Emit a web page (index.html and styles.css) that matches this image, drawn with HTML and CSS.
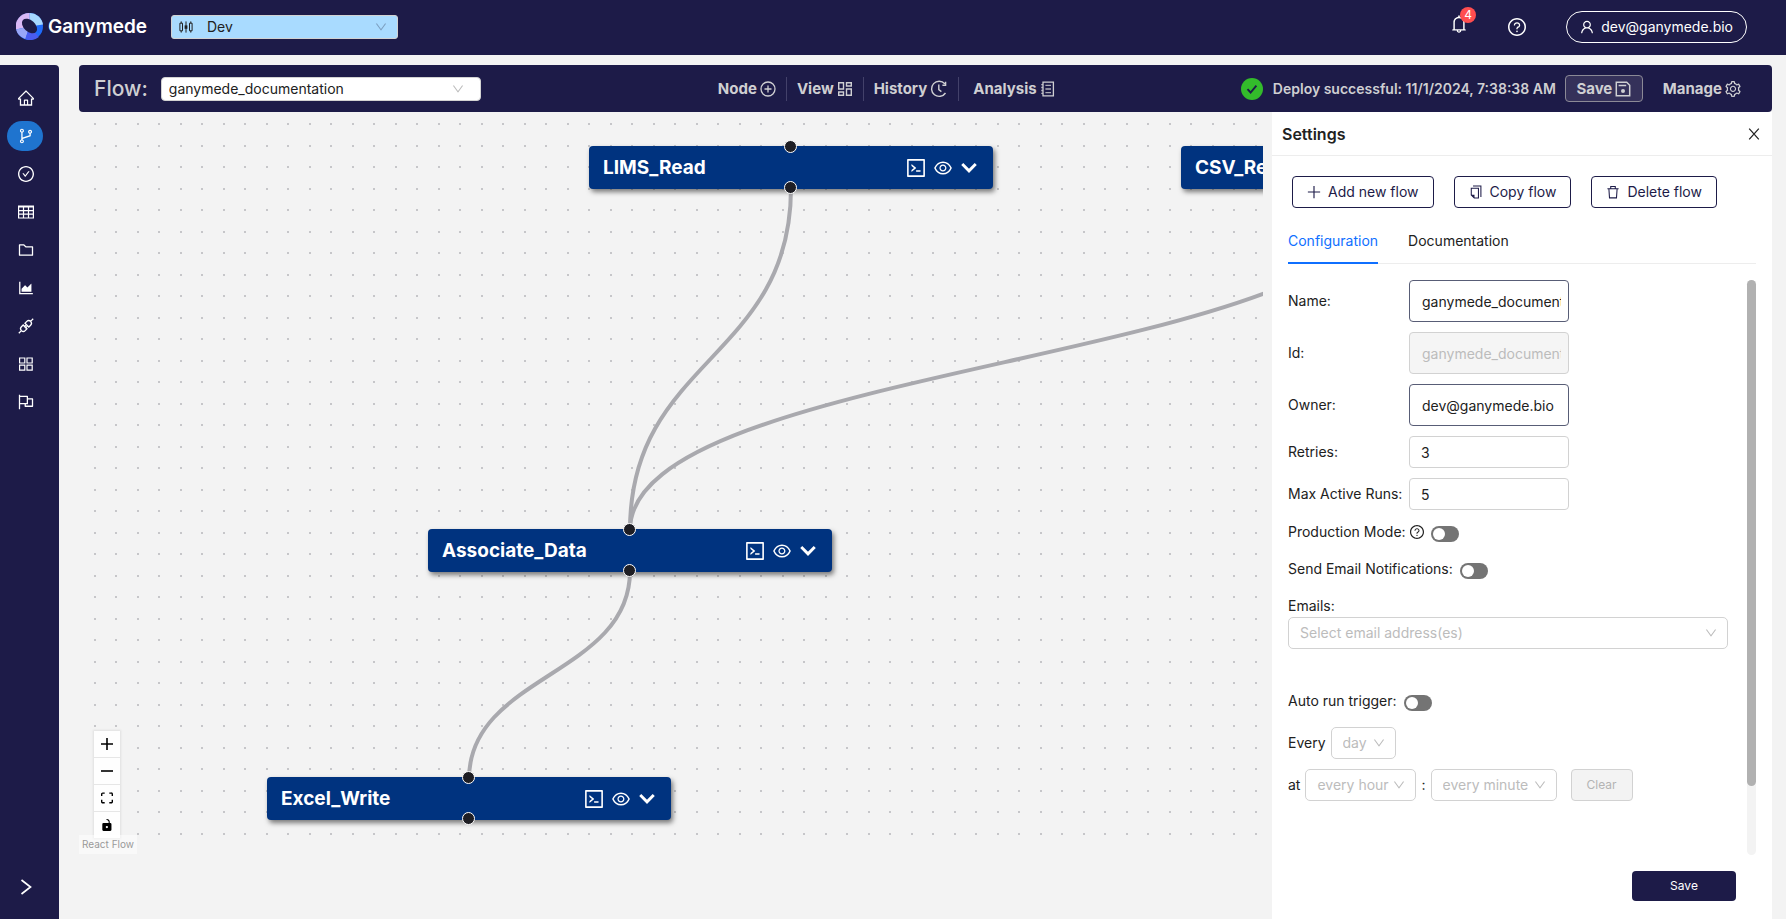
FILE: index.html
```html
<!DOCTYPE html>
<html lang="en">
<head>
<meta charset="utf-8">
<title>Ganymede – ganymede_documentation</title>
<link rel="stylesheet" href="styles.css">
</head>
<body>
<svg class="sprite" aria-hidden="true">
  <symbol id="i-down" viewBox="64 64 896 896"><path d="M884 256h-75c-5.1 0-9.9 2.5-12.9 6.6L512 654.2 227.9 262.6c-3-4.1-7.8-6.6-12.9-6.6h-75c-6.5 0-10.3 7.4-6.5 12.7l352.6 486.1c12.8 17.6 39 17.6 51.7 0l352.6-486.1c3.9-5.3.1-12.7-6.4-12.7z"/></symbol>
  <symbol id="i-chevron" viewBox="0 0 16 16"><path d="M2 4.500l6 6 6-6" fill="none" stroke="currentColor" stroke-width="2.600"/></symbol>
  <symbol id="i-home" viewBox="64 64 896 896"><path d="M946.5 505L560.1 118.8l-25.9-25.9a31.5 31.5 0 00-44.4 0L77.5 505a63.9 63.9 0 00-18.8 46c.4 35.2 29.7 63.3 64.9 63.3h42.5V940h691.8V614.3h43.4c17.1 0 33.2-6.7 45.3-18.8a63.6 63.6 0 0018.7-45.3c0-17-6.7-33.1-18.8-45.2zM568 868H456V664h112v204zm217.9-325.7V868H632V640c0-22.1-17.9-40-40-40H432c-22.1 0-40 17.9-40 40v228H238.1V542.3h-96l370-369.7 23.1 23.1L882 542.3h-96.1z"/></symbol>
  <symbol id="i-branch" viewBox="64 64 896 896"><path d="M740 161c-61.8 0-112 50.2-112 112 0 50.1 33.1 92.6 78.5 106.9v95.9L320 602.4V318.1c44.2-15 76-56.9 76-106.1 0-61.8-50.2-112-112-112s-112 50.2-112 112c0 49.2 31.8 91 76 106.1V706c-44.2 15-76 56.9-76 106.1 0 61.8 50.2 112 112 112s112-50.2 112-112c0-49.2-31.8-91-76-106.1v-27.8l423.5-138.7a50.52 50.52 0 0034.9-48.2V378.2c42.9-15.8 73.6-57 73.6-105.2 0-61.8-50.2-112-112-112zm-504 51a48.01 48.01 0 0196 0 48.01 48.01 0 01-96 0zm96 600a48.01 48.01 0 01-96 0 48.01 48.01 0 0196 0zm408-491a48.01 48.01 0 010-96 48.01 48.01 0 010 96z"/></symbol>
  <symbol id="i-check" viewBox="64 64 896 896"><path d="M699 353h-46.9c-10.2 0-19.9 4.9-25.9 13.3L469 584.3l-71.2-98.8c-6-8.3-15.6-13.3-25.9-13.3H325c-6.5 0-10.3 7.4-6.5 12.7l124.6 172.8a31.8 31.8 0 0051.7 0l210.6-292c3.9-5.3.1-12.7-6.4-12.7z"/><path d="M512 64C264.6 64 64 264.6 64 512s200.6 448 448 448 448-200.6 448-448S759.4 64 512 64zm0 820c-205.4 0-372-166.6-372-372s166.6-372 372-372 372 166.6 372 372-166.6 372-372 372z"/></symbol>
  <symbol id="i-table" viewBox="0 0 16 16"><path d="M.6 2h14.8v12H.6zM.6 3h14.8M.6 6.6h14.8M.6 10.2h14.8M5.5 2v12M10.5 2v12" fill="none" stroke="currentColor" stroke-width="1.2"/></symbol>
  <symbol id="i-folder" viewBox="64 64 896 896"><path d="M880 298.4H521L403.7 186.2a8.15 8.15 0 00-5.5-2.2H144c-17.7 0-32 14.3-32 32v592c0 17.7 14.3 32 32 32h736c17.7 0 32-14.3 32-32V330.4c0-17.7-14.3-32-32-32zM840 768H184V256h188.5l119.6 114.4H840V768z"/></symbol>
  <symbol id="i-area" viewBox="64 64 896 896"><path d="M888 792H200V168c0-4.4-3.6-8-8-8h-56c-4.4 0-8 3.6-8 8v688c0 4.4 3.6 8 8 8h752c4.4 0 8-3.6 8-8v-56c0-4.4-3.6-8-8-8zm-616-64h536c4.4 0 8-3.6 8-8V284c0-7.2-8.7-10.7-13.7-5.7L592 488.6l-125.4-124a8.03 8.03 0 00-11.3 0l-189 189.6a7.87 7.87 0 00-2.3 5.6V720c0 4.4 3.6 8 8 8z"/></symbol>
  <symbol id="i-plug" viewBox="0 0 16 16"><g fill="none" stroke="currentColor" stroke-width="1.3"><path d="M.8 15.200l2.600-2.600M12.600 3.400L15.200.8M7 5.200l3.800 3.800 1.800-1.800a2.700 2.700 0 000-3.800 2.700 2.700 0 00-3.800 0zM5.200 7l3.800 3.800-1.800 1.800a2.700 2.700 0 01-3.800 0 2.700 2.700 0 010-3.800zM6 9l1.800-1.800M7.200 10.200L9 8.400"/></g></symbol>
  <symbol id="i-apps" viewBox="0 0 16 16"><path d="M1.600 2h5.200v5H1.600zM9 2h5.200v5H9zM1.600 9.200h5.200v5H1.600zM9 9.200h5.200v5H9z" fill="none" stroke="currentColor" stroke-width="1.200"/></symbol>
  <symbol id="i-flag" viewBox="64 64 896 896"><path d="M880 305H624V192c0-17.700-14.300-32-32-32H184v-40c0-4.400-3.600-8-8-8h-56c-4.400 0-8 3.600-8 8v784c0 4.400 3.600 8 8 8h56c4.400 0 8-3.600 8-8V640h248v113c0 17.700 14.300 32 32 32h416c17.700 0 32-14.300 32-32V337c0-17.700-14.300-32-32-32zM184 568V232h368v336H184zm656 145H504v-73h112c4.400 0 8-3.600 8-8V377h216v336z"/></symbol>
  <symbol id="i-question" viewBox="64 64 896 896"><path d="M512 64C264.600 64 64 264.600 64 512s200.600 448 448 448 448-200.600 448-448S759.400 64 512 64zm0 820c-205.400 0-372-166.600-372-372s166.600-372 372-372 372 166.600 372 372-166.600 372-372 372z"/><path d="M623.6 316.7C593.6 290.4 554 276 512 276s-81.600 14.500-111.600 40.700C369.200 344 352 380.700 352 420v7.600c0 4.400 3.600 8 8 8h48c4.400 0 8-3.600 8-8V420c0-44.100 43.100-80 96-80s96 35.900 96 80c0 31.100-22 59.600-56.100 72.700-21.200 8.100-39.200 22.300-52.100 40.900-13.100 19-19.900 41.800-19.900 64.900V620c0 4.400 3.600 8 8 8h48c4.400 0 8-3.600 8-8v-22.700a48.300 48.300 0 0130.900-44.800c59-22.700 97.100-74.700 97.100-132.500.1-39.300-17.100-76-48.300-103.300zM472 732a40 40 0 1080 0 40 40 0 10-80 0z"/></symbol>
  <symbol id="i-bell" viewBox="64 64 896 896"><path d="M816 768h-24V428c0-141.1-104.3-257.7-240-277.1V112c0-22.1-17.9-40-40-40s-40 17.9-40 40v38.9c-135.7 19.4-240 136-240 277.1v340h-24c-17.7 0-32 14.3-32 32v32c0 4.4 3.6 8 8 8h216c0 61.8 50.2 112 112 112s112-50.2 112-112h216c4.400 0 8-3.600 8-8v-32c0-17.700-14.300-32-32-32zM512 888c-26.500 0-48-21.500-48-48h96c0 26.500-21.500 48-48 48zM304 768V428c0-55.600 21.600-107.800 60.900-147.100S456.400 220 512 220c55.600 0 107.800 21.600 147.100 60.900S720 372.400 720 428v340H304z"/></symbol>
  <symbol id="i-user" viewBox="64 64 896 896"><path d="M858.5 763.6a374 374 0 00-80.6-119.5 375.63 375.63 0 00-119.5-80.6c-.4-.2-.8-.3-1.2-.5C719.5 518 760 444.7 760 362c0-137-111-248-248-248S264 225 264 362c0 82.7 40.5 156 102.8 201.1-.4.2-.8.3-1.2.5-44.8 18.9-85 46-119.5 80.6a375.63 375.63 0 00-80.6 119.5A371.7 371.7 0 00136 901.8a8 8 0 008 8.2h60c4.4 0 7.9-3.5 8-7.8 2-77.2 33-149.5 87.8-204.3 56.7-56.7 132-87.9 212.2-87.9s155.5 31.2 212.2 87.9C779 752.7 810 825 812 902.2c.1 4.4 3.6 7.8 8 7.8h60a8 8 0 008-8.2c-1-47.8-10.900-94.300-29.500-138.200zM512 534c-45.900 0-89.100-17.900-121.600-50.400S340 407.900 340 362c0-45.900 17.900-89.100 50.400-121.600S466.100 190 512 190s89.100 17.900 121.600 50.400S684 316.100 684 362c0 45.900-17.900 89.100-50.400 121.600S557.900 534 512 534z"/></symbol>
  <symbol id="i-eye" viewBox="64 64 896 896"><path d="M942.2 486.2C847.4 286.5 704.1 186 512 186c-192.2 0-335.4 100.5-430.2 300.3a60.3 60.3 0 000 51.5C176.6 737.5 319.9 838 512 838c192.2 0 335.4-100.5 430.2-300.3 7.7-16.2 7.7-35 0-51.5zM512 766c-161.3 0-279.4-81.8-362.7-254C232.6 339.8 350.7 258 512 258c161.3 0 279.4 81.8 362.7 254C791.5 684.2 673.4 766 512 766zm-4-430c-97.2 0-176 78.8-176 176s78.8 176 176 176 176-78.8 176-176-78.8-176-176-176zm0 288c-61.900 0-112-50.100-112-112s50.100-112 112-112 112 50.100 112 112-50.100 112-112 112z"/></symbol>
  <symbol id="i-code" viewBox="64 64 896 896"><path d="M516 673c0 4.4 3.4 8 7.5 8h185c4.1 0 7.5-3.6 7.5-8v-48c0-4.4-3.4-8-7.5-8h-185c-4.100 0-7.500 3.600-7.500 8v48zm-194.900 6.100l192-161c3.800-3.200 3.800-9.100 0-12.300l-192-160.900A7.950 7.950 0 00308 351v62.700c0 2.400 1 4.600 2.900 6.100L420.700 512l-109.800 92.200a8.100 8.100 0 00-2.900 6.100V673c0 6.800 7.900 10.500 13.100 6.100zM880 112H144c-17.700 0-32 14.300-32 32v736c0 17.700 14.300 32 32 32h736c17.700 0 32-14.300 32-32V144c0-17.700-14.300-32-32-32zm-40 728H184V184h656v656z"/></symbol>
  <symbol id="i-gear" viewBox="64 64 896 896"><path d="M924.8 625.7l-65.5-56c3.1-19 4.7-38.4 4.7-57.8s-1.6-38.8-4.7-57.8l65.5-56a32.03 32.03 0 009.3-35.2l-.9-2.6a443.74 443.74 0 00-79.7-137.9l-1.8-2.1a32.12 32.12 0 00-35.1-9.5l-81.3 28.9c-30-24.6-63.5-44-99.7-57.6l-15.7-85a32.05 32.05 0 00-25.8-25.7l-2.7-.5c-52.1-9.4-106.9-9.4-159 0l-2.7.5a32.05 32.05 0 00-25.8 25.7l-15.8 85.4a351.86 351.86 0 00-99 57.4l-81.9-29.1a32 32 0 00-35.1 9.5l-1.8 2.1a446.02 446.02 0 00-79.7 137.9l-.9 2.6c-4.5 12.5-.8 26.5 9.3 35.2l66.3 56.6c-3.1 18.8-4.6 38-4.6 57.1 0 19.2 1.5 38.4 4.6 57.1L99 625.5a32.03 32.03 0 00-9.3 35.2l.9 2.6c18.1 50.4 44.9 96.9 79.7 137.9l1.8 2.1a32.12 32.12 0 0035.1 9.5l81.9-29.1c29.8 24.5 63.1 43.9 99 57.4l15.8 85.4a32.05 32.05 0 0025.8 25.7l2.7.5a449.4 449.4 0 00159 0l2.7-.5a32.05 32.05 0 0025.8-25.7l15.7-85a350 350 0 0099.7-57.6l81.3 28.9a32 32 0 0035.1-9.5l1.8-2.1c34.8-41.1 61.6-87.5 79.7-137.9l.9-2.6c4.5-12.300.8-26.300-9.300-35zM788.300 465.900c2.500 15.100 3.800 30.600 3.800 46.100s-1.300 31-3.800 46.100l-6.600 40.100 74.700 63.900a370.030 370.030 0 01-42.600 73.600L721 702.800l-31.400 25.800c-23.900 19.600-50.500 35-79.300 45.800l-38.100 14.300-17.900 97a377.500 377.500 0 01-85 0l-17.900-97.200-37.800-14.500c-28.500-10.800-55-26.200-78.700-45.700l-31.400-25.900-93.400 33.200c-17-22.900-31.200-47.600-42.600-73.600l75.500-64.500-6.500-40c-2.400-14.900-3.700-30.300-3.700-45.500 0-15.300 1.200-30.600 3.700-45.500l6.500-40-75.500-64.500c11.300-26.100 25.600-50.700 42.600-73.600l93.400 33.200 31.400-25.900c23.700-19.500 50.200-34.900 78.700-45.700l37.900-14.300 17.900-97.200c28.100-3.200 56.800-3.200 85 0l17.900 97 38.100 14.300c28.700 10.800 55.400 26.200 79.300 45.800l31.400 25.800 92.800-32.900c17 22.900 31.200 47.600 42.600 73.600L781.800 426l6.500 39.900zM512 326c-97.200 0-176 78.800-176 176s78.800 176 176 176 176-78.800 176-176-78.800-176-176-176zm79.200 255.200A111.600 111.600 0 01512 614c-29.900 0-58-11.700-79.200-32.800A111.600 111.600 0 01400 502c0-29.900 11.700-58 32.800-79.200C454 401.600 482.100 390 512 390c29.900 0 58 11.600 79.200 32.800A111.600 111.600 0 01624 502c0 29.900-11.700 58-32.800 79.200z"/></symbol>
  <symbol id="i-addcircle" viewBox="0 0 16 16"><path d="M8 1a7 7 0 100 14A7 7 0 108 1zM8 4.500v7M4.500 8h7" fill="none" stroke="currentColor" stroke-width="1.300"/></symbol>
  <symbol id="i-view" viewBox="0 0 16 16"><path d="M1.700 1.700h4.800v6.300H1.700zM9.500 1.700h4.800v3.300H9.500zM9.500 8h4.800v6.300H9.500zM1.700 11h4.800v3.300H1.700z" fill="none" stroke="currentColor" stroke-width="1.400"/></symbol>
  <symbol id="i-history" viewBox="0 0 18 18"><path d="M14.800 3.700A7.600 7.600 0 1015.500 13M8.800 4.600v5l2.600 2M15.600 1.800v3.400h-3.200" fill="none" stroke="currentColor" stroke-width="1.400"/></symbol>
  <symbol id="i-report" viewBox="0 0 16 16"><path d="M3 1.200h10.400v13.600H3z" fill="none" stroke="currentColor" stroke-width="1.300"/><path d="M1.200 3.600H3M1.200 6.500H3M1.200 9.500H3M1.200 12.400H3M5.400 4.400H11M5.400 8H11M5.400 11.600H11" fill="none" stroke="currentColor" stroke-width="1.300" opacity=".8"/></symbol>
  <symbol id="i-save" viewBox="0 0 16 16"><path d="M1.300 1.300h10.400l3 3v10.400H1.300zM3.600 4.600h7.600" fill="none" stroke="currentColor" stroke-width="1.500"/><circle cx="8" cy="10" r="2"/></symbol>
  <symbol id="i-close" viewBox="0 0 16 16"><path d="M2.500 1.800l11 12.400M13.500 1.800l-11 12.400" fill="none" stroke="currentColor" stroke-width="1.400"/></symbol>
  <symbol id="i-plus" viewBox="0 0 16 16"><path d="M8 1v14M1 8h14" fill="none" stroke="currentColor" stroke-width="1.300"/></symbol>
  <symbol id="i-copy" viewBox="0 0 16 16"><path d="M4.600 1.200h9v12.400M2.600 3.600h8.200v11.200H6L2.600 11.400z" fill="none" stroke="currentColor" stroke-width="1.200"/><path d="M2.400 11h3.900v3.900z"/></symbol>
  <symbol id="i-trash" viewBox="0 0 16 16"><path d="M1.600 4.200h12.800M5.400 4V1.600h5.200V4M3.300 4.200l.7 10.500h8l.7-10.500" fill="none" stroke="currentColor" stroke-width="1.200"/></symbol>
  <symbol id="i-candles" viewBox="0 0 14 12"><path d="M2.200.4v1.800M2.200 9.800v1.800M11.800.4v1.800M11.800 9.800v1.800M.9 2.200h2.600v7.600H.9zM10.500 2.200h2.600v7.600h-2.600zM7 .4v11.200" fill="none" stroke="currentColor" stroke-width="1"/><path d="M5.600 4.400h2.800v3.400H5.600z"/></symbol>
  <symbol id="i-fit" viewBox="0 0 32 30"><path d="M3.692 4.63c0-.53.4-.938.939-.938h5.215V0H4.708C2.13 0 0 2.054 0 4.63v5.216h3.692V4.631zM27.354 0h-5.2v3.692h5.17c.53 0 .984.4.984.939v5.215H32V4.631A4.624 4.624 0 0027.354 0zm.954 24.83c0 .532-.4.94-.939.94h-5.215v3.768h5.215c2.577 0 4.631-2.13 4.631-4.707v-5.139h-3.692v5.139zm-23.677.94c-.531 0-.939-.4-.939-.94v-5.138H0v5.139c0 2.577 2.13 4.707 4.708 4.707h5.138V25.77H4.631z"/></symbol>
  <symbol id="i-unlock" viewBox="0 0 25 32"><path d="M21.333 10.667H19.81V7.619C19.81 3.429 16.38 0 12.19 0c-4.114 1.828-1.37 2.133.305 2.438 1.676.305 4.42 2.59 4.42 5.181v3.048H3.047A3.056 3.056 0 000 13.714v15.238A3.056 3.056 0 003.048 32h18.285a3.056 3.056 0 003.048-3.048V13.714a3.056 3.056 0 00-3.048-3.047zM12.19 24.533a3.056 3.056 0 01-3.047-3.047 3.056 3.056 0 013.047-3.048 3.056 3.056 0 013.048 3.048 3.056 3.056 0 01-3.048 3.047z"/></symbol>
</svg>

<header class="topbar">
  <a class="brand" href="#">
    <svg class="brand-mark" viewBox="0 0 26 26" aria-hidden="true">
      <circle cx="13" cy="13" r="13" fill="#1f6bfb"/>
      <path d="M13 13V0a13 13 0 0113 11z" fill="#a6d8ff"/>
      <path d="M13 13L0 16A13 13 0 0113 0z" fill="#d9b8f6"/>
      <path d="M13 13L0 16a13 13 0 009 9z" fill="#98a6f7"/>
      <path d="M13 13L9 25a13 13 0 0013-2z" fill="#4a5cf0"/>
      <ellipse cx="13" cy="12.500" rx="8.500" ry="5.500" transform="rotate(42 13 12.500)" fill="#1d1b48"/>
    </svg>
    <span class="brand-name">Ganymede</span>
  </a>
  <div class="picker picker-env">
    <svg class="icon-candles picker-lead" aria-hidden="true"><use href="#i-candles"/></svg>
    <select aria-label="Environment"><option>Dev</option></select>
    <svg class="icon-12 picker-arrow" aria-hidden="true"><use href="#i-down"/></svg>
  </div>
  <div class="topbar-tools">
    <button class="icon-button bell" type="button" aria-label="Notifications">
      <svg class="icon-18" aria-hidden="true"><use href="#i-bell"/></svg>
      <span class="badge">4</span>
    </button>
    <button class="icon-button" type="button" aria-label="Help"><svg class="icon-18" aria-hidden="true"><use href="#i-question"/></svg></button>
    <button class="account" type="button"><svg class="icon-14" aria-hidden="true"><use href="#i-user"/></svg>dev@ganymede.bio</button>
  </div>
</header>

<div class="shell">
  <nav class="sidebar" aria-label="Main">
    <a class="side-link" href="#" aria-label="Home"><svg class="icon-16"><use href="#i-home"/></svg></a>
    <a class="side-link active" href="#" aria-label="Flows"><svg class="icon-16"><use href="#i-branch"/></svg></a>
    <a class="side-link" href="#" aria-label="Runs"><svg class="icon-16"><use href="#i-check"/></svg></a>
    <a class="side-link" href="#" aria-label="Tables"><svg class="icon-16"><use href="#i-table"/></svg></a>
    <a class="side-link" href="#" aria-label="Files"><svg class="icon-16"><use href="#i-folder"/></svg></a>
    <a class="side-link" href="#" aria-label="Dashboards"><svg class="icon-16"><use href="#i-area"/></svg></a>
    <a class="side-link" href="#" aria-label="Connections"><svg class="icon-16"><use href="#i-plug"/></svg></a>
    <a class="side-link" href="#" aria-label="Apps"><svg class="icon-16"><use href="#i-apps"/></svg></a>
    <a class="side-link" href="#" aria-label="Agents"><svg class="icon-16"><use href="#i-flag"/></svg></a>
    <button class="side-expand" type="button" aria-label="Expand menu"><svg class="icon-16" viewBox="0 0 16 16"><path d="M3.500 1l9 7-9 7" fill="none" stroke="currentColor" stroke-width="1.700"/></svg></button>
  </nav>

  <main class="workspace">
    <div class="toolbar">
      <div class="toolbar-flow">
        <label class="flow-label" for="flow">Flow:</label>
        <div class="picker picker-flow">
          <select id="flow"><option>ganymede_documentation</option></select>
          <svg class="icon-12 picker-arrow" aria-hidden="true"><use href="#i-down"/></svg>
        </div>
      </div>
      <div class="toolbar-menu">
        <button type="button">Node<svg class="icon-16"><use href="#i-addcircle"/></svg></button>
        <button type="button">View<svg class="icon-16"><use href="#i-view"/></svg></button>
        <button type="button">History<svg class="icon-18"><use href="#i-history"/></svg></button>
        <button type="button">Analysis<svg class="icon-16"><use href="#i-report"/></svg></button>
      </div>
      <div class="toolbar-status">
        <svg class="status-dot" viewBox="0 0 22 22" aria-hidden="true"><circle cx="11" cy="11" r="11" fill="#33bb2b"/><path d="M6.500 11.200l3.100 3.300 5.800-6.800" fill="none" stroke="#1d1b48" stroke-width="1.900"/></svg>
        <span class="status-text">Deploy successful: 11/1/2024, 7:38:38 AM</span>
        <button class="toolbar-save" type="button">Save<svg class="icon-16"><use href="#i-save"/></svg></button>
        <button class="toolbar-manage" type="button">Manage<svg class="icon-16"><use href="#i-gear"/></svg></button>
      </div>
    </div>

    <div class="stage">
      <section class="canvas" aria-label="Flow diagram">
        <svg class="edges" aria-hidden="true">
          <path d="M712 76C712 247 551 247 551 418"/>
          <path d="M1304 80C1304 250 551 250 551 418"/>
          <path d="M551 459C551 563 390 563 390 667"/>
        </svg>
        <article class="node node-lims">
          <h2>LIMS_Read</h2>
          <button type="button" aria-label="Code"><svg class="icon-20"><use href="#i-code"/></svg></button>
          <button type="button" aria-label="Preview"><svg class="icon-18"><use href="#i-eye"/></svg></button>
          <button type="button" aria-label="Expand"><svg class="icon-18"><use href="#i-chevron"/></svg></button>
          <i class="port port-in"></i><i class="port port-out"></i>
        </article>
        <article class="node node-csv">
          <h2>CSV_Read</h2>
        </article>
        <article class="node node-associate">
          <h2>Associate_Data</h2>
          <button type="button" aria-label="Code"><svg class="icon-20"><use href="#i-code"/></svg></button>
          <button type="button" aria-label="Preview"><svg class="icon-18"><use href="#i-eye"/></svg></button>
          <button type="button" aria-label="Expand"><svg class="icon-18"><use href="#i-chevron"/></svg></button>
          <i class="port port-in"></i><i class="port port-out"></i>
        </article>
        <article class="node node-excel">
          <h2>Excel_Write</h2>
          <button type="button" aria-label="Code"><svg class="icon-20"><use href="#i-code"/></svg></button>
          <button type="button" aria-label="Preview"><svg class="icon-18"><use href="#i-eye"/></svg></button>
          <button type="button" aria-label="Expand"><svg class="icon-18"><use href="#i-chevron"/></svg></button>
          <i class="port port-in"></i><i class="port port-out"></i>
        </article>
        <div class="controls">
          <button type="button" aria-label="Zoom in"><svg viewBox="0 0 12 12"><path d="M0 6h12M6 0v12" stroke="currentColor" stroke-width="1.600"/></svg></button>
          <button type="button" aria-label="Zoom out"><svg viewBox="0 0 12 12"><path d="M0 6h12" stroke="currentColor" stroke-width="1.600"/></svg></button>
          <button type="button" aria-label="Fit view"><svg><use href="#i-fit"/></svg></button>
          <button type="button" aria-label="Toggle lock"><svg><use href="#i-unlock"/></svg></button>
        </div>
        <a class="attribution" href="#">React Flow</a>
      </section>

      <aside class="panel" aria-label="Settings">
        <div class="panel-head">
          <h1>Settings</h1>
          <button type="button" aria-label="Close"><svg class="icon-14"><use href="#i-close"/></svg></button>
        </div>
        <div class="panel-actions">
          <button type="button"><svg class="icon-14"><use href="#i-plus"/></svg>Add new flow</button>
          <button type="button"><svg class="icon-14"><use href="#i-copy"/></svg>Copy flow</button>
          <button type="button"><svg class="icon-14"><use href="#i-trash"/></svg>Delete flow</button>
        </div>
        <div class="tabs" role="tablist">
          <button class="tab selected" type="button" role="tab" aria-selected="true">Configuration</button>
          <button class="tab" type="button" role="tab" aria-selected="false">Documentation</button>
        </div>
        <div class="panel-body">
          <form class="settings">
            <div class="fields">
              <label for="name">Name:</label><input class="tall" id="name" type="text" value="ganymede_documentation">
              <label for="flow-id">Id:</label><input class="tall" id="flow-id" type="text" value="ganymede_documentation" disabled>
              <label for="owner">Owner:</label><input class="tall" id="owner" type="text" value="dev@ganymede.bio">
              <label for="retries">Retries:</label><input id="retries" type="text" value="3">
              <label for="max-runs">Max Active Runs:</label><input id="max-runs" type="text" value="5">
            </div>
            <div class="switch-row">
              <label for="production">Production Mode:</label>
              <svg class="icon-14" aria-hidden="true"><use href="#i-question"/></svg>
              <input class="switch" id="production" type="checkbox" role="switch">
            </div>
            <div class="switch-row">
              <label for="notify">Send Email Notifications:</label>
              <input class="switch" id="notify" type="checkbox" role="switch">
            </div>
            <div class="emails">
              <label for="emails">Emails:</label>
              <div class="picker picker-emails">
                <select id="emails"><option>Select email address(es)</option></select>
                <svg class="icon-12 picker-arrow" aria-hidden="true"><use href="#i-down"/></svg>
              </div>
            </div>
            <div class="switch-row auto-run">
              <label for="autorun">Auto run trigger:</label>
              <input class="switch" id="autorun" type="checkbox" role="switch">
            </div>
            <div class="schedule">
              <label for="period">Every</label>
              <div class="picker picker-day">
                <select id="period" disabled><option>day</option></select>
                <svg class="icon-12 picker-arrow" aria-hidden="true"><use href="#i-down"/></svg>
              </div>
            </div>
            <div class="schedule">
              <label for="hour">at</label>
              <div class="picker picker-hour">
                <select id="hour" disabled><option>every hour</option></select>
                <svg class="icon-12 picker-arrow" aria-hidden="true"><use href="#i-down"/></svg>
              </div>
              <label for="minute">:</label>
              <div class="picker picker-minute">
                <select id="minute" disabled><option>every minute</option></select>
                <svg class="icon-12 picker-arrow" aria-hidden="true"><use href="#i-down"/></svg>
              </div>
              <button class="clear" type="button" disabled>Clear</button>
            </div>
          </form>
          <div class="scroll-track" aria-hidden="true"><div class="scroll-thumb"></div></div>
        </div>
        <div class="panel-foot"><button class="save" type="button">Save</button></div>
      </aside>
    </div>
  </main>
</div>
</body>
</html>
```
FILE: styles.css
```css
:root {
  --navy: #1d1b48;
  --page: #f3f3f3;
  --ink: #212121;
  --soft: #cfcfd2;
  --line: #d2d2d2;
  --faint: #bcbcbc;
}

* { box-sizing: border-box; }

body {
  margin: 0;
  min-height: 100vh;
  display: flex;
  flex-direction: column;
  background: var(--page);
  color: var(--ink);
  font: 14px/22px Inter, "Liberation Sans", sans-serif;
}

button, input, select { font: inherit; color: inherit; margin: 0; }
button { background: none; border: 0; padding: 0; display: inline-flex; align-items: center; justify-content: center; }
a { color: inherit; text-decoration: none; }
h1, h2 { margin: 0; }
svg { flex: none; fill: currentColor; display: block; }

.sprite { position: absolute; width: 0; height: 0; }
.icon-12 { width: 12px; height: 12px; }
.icon-14 { width: 14px; height: 14px; }
.icon-16 { width: 16px; height: 16px; }
.icon-18 { width: 18px; height: 18px; }
.icon-20 { width: 20px; height: 20px; }
.icon-candles { width: 14px; height: 12px; }

/* Drop-downs: the select and its icons share one grid cell */
.picker { display: grid; align-items: center; }
.picker > * { grid-area: 1 / 1; }
.picker select {
  appearance: none;
  width: 100%;
  height: 32px;
  padding: 0 11px;
  border: 1px solid var(--line);
  border-radius: 5px;
  background: #fff;
}
.picker select:disabled { color: var(--faint); opacity: 1; }
.picker-arrow { justify-self: end; margin-right: 11px; color: var(--faint); pointer-events: none; z-index: 1; }
.picker-lead { margin-left: 8px; pointer-events: none; z-index: 1; }

/* Top bar */
.topbar {
  height: 55px;
  padding: 0 39px 2px 16px;
  display: flex;
  align-items: center;
  background: var(--navy);
  color: #fff;
}
.brand { display: flex; align-items: center; gap: 5px; width: 155px; }
.brand-mark { width: 27px; height: 27px; }
.brand-name { font-size: 19px; font-weight: 600; }
.picker-env { width: 227px; color: var(--ink); }
.picker-env select { height: 24px; padding-left: 35px; background: #a9dbff; border-radius: 3px; }
.picker-env .picker-arrow { color: #7d9fc0; }
.topbar-tools { margin-left: auto; display: flex; align-items: center; }
.icon-button { width: 18px; height: 18px; }
.bell { position: relative; margin: 0 40px 6px 0; }
.badge {
  position: absolute;
  left: 10px;
  top: -8px;
  width: 16px;
  height: 16px;
  border-radius: 8px;
  background: #ff4d4f;
  font-size: 12px;
  line-height: 16px;
  text-align: center;
}
.account { margin-left: 40px; height: 32px; padding: 0 13px; gap: 7px; border: 1px solid #fff; border-radius: 16px; }

/* Frame */
.shell { flex: 1; display: flex; padding-top: 10px; }
.sidebar {
  width: 59px;
  padding: 18px 8px 24px 7px;
  display: flex;
  flex-direction: column;
  gap: 8px;
  background: var(--navy);
  color: #fff;
  border-top-right-radius: 4px;
}
.side-link { width: 36px; height: 30px; padding-left: 2px; display: grid; place-items: center; border-radius: 15px; }
.side-link.active { background: #1f74cf; }
.side-expand { margin-top: auto; width: 38px; height: 16px; }
.workspace { flex: 1; min-width: 0; margin: 0 14px 0 20px; display: flex; flex-direction: column; }

/* Toolbar */
.toolbar {
  height: 47px;
  padding: 0 31px 0 15px;
  display: flex;
  align-items: center;
  background: var(--navy);
  color: var(--soft);
  border-radius: 4px;
}
.toolbar-flow { flex: 0 0 38%; display: flex; align-items: center; gap: 13px; }
.flow-label { font-size: 21px; font-weight: 500; }
.picker-flow { width: 320px; color: var(--ink); }
.picker-flow select { height: 24px; padding: 0 7px; border-radius: 4px; }
.picker-flow .picker-arrow { margin-right: 17px; }
.toolbar-menu { display: flex; margin-left: -2px; font-size: 15px; font-weight: 700; }
.toolbar-menu button { gap: 3px; height: 24px; padding: 0 10px; }
.toolbar-menu button + button { border-left: 1px solid #43416a; }
.toolbar-menu button:first-child { padding-left: 0; }
.toolbar-menu button:last-child { padding-left: 14px; }
.toolbar-status { margin-left: auto; display: flex; align-items: center; font-weight: 600; }
.status-dot { width: 22px; height: 22px; margin-right: 10px; }
.toolbar-save { margin: 0 20px 0 9px; width: 78px; height: 27px; gap: 3px; font-size: 15px; font-weight: 700; border: 1px solid #8b8996; border-radius: 4px; background: #35315a; }
.toolbar-manage { gap: 3px; font-size: 15px; font-weight: 700; }

/* Diagram */
.stage { flex: 1; display: flex; gap: 9px; }
.canvas {
  flex: 1;
  min-width: 0;
  margin-bottom: 65px;
  position: relative;
  overflow: hidden;
  background: radial-gradient(circle at 16px 12px, #c6c6c9 0, #c6c6c9 1px, transparent 1px) 0 0 / 43px 43px,
    radial-gradient(circle at 37px 12px, #c6c6c9 0, #c6c6c9 1px, transparent 1px) 0 0 / 43px 43px,
    radial-gradient(circle at 16px 34px, #c6c6c9 0, #c6c6c9 1px, transparent 1px) 0 0 / 43px 43px,
    radial-gradient(circle at 37px 34px, #c6c6c9 0, #c6c6c9 1px, transparent 1px) 0 0 / 43px 43px;
}
.edges { position: absolute; inset: 0; width: 100%; height: 100%; fill: none; stroke: #a9a9ae; stroke-width: 4; }
.node {
  position: absolute;
  width: 404px;
  height: 43px;
  padding: 0 15px 0 14px;
  display: flex;
  align-items: center;
  gap: 8px;
  background: #00337f;
  color: #fff;
  border-radius: 4px;
  box-shadow: 2px 3px 5px rgba(0, 0, 0, 0.5);
}
.node h2 { margin-right: auto; font-size: 19px; font-weight: 700; }
.node-lims { left: 510px; top: 34px; }
.node-csv { left: 1102px; top: 34px; }
.node-associate { left: 349px; top: 417px; }
.node-excel { left: 188px; top: 665px; }
.port { position: absolute; left: 195px; width: 13px; height: 13px; border: 1px solid #fff; border-radius: 50%; background: #1e1e24; }
.port-in { top: -6px; }
.port-out { bottom: -5px; }
.controls { position: absolute; left: 15px; bottom: 16px; display: flex; flex-direction: column; gap: 1px; background: #e6e6e6; box-shadow: 0 0 2px 1px rgba(0, 0, 0, 0.08); }
.controls button { width: 26px; height: 26px; background: #fefefe; color: #000; }
.controls svg { width: 12px; height: 12px; }
.attribution { position: absolute; left: 0; bottom: 0; padding: 0 3px; font-size: 10px; line-height: 19px; color: #999; background: rgba(255, 255, 255, 0.5); }

/* Settings panel */
.panel { width: 500px; display: flex; flex-direction: column; background: #fff; }
.panel-head { height: 44px; padding: 0 11px 0 10px; display: flex; align-items: center; justify-content: space-between; border-bottom: 1px solid #ededed; }
.panel-head h1 { font-size: 16px; font-weight: 600; }
.panel-actions { display: flex; gap: 20px; padding: 20px 20px 0; color: var(--navy); }
.panel-actions button { height: 32px; padding: 0 14px; gap: 7px; border: 1px solid var(--navy); border-radius: 4px; }
.tabs { margin: 10px 16px 0; height: 46px; display: flex; gap: 30px; border-bottom: 1px solid #ededed; }
.tab { height: 46px; padding-top: 2px; border-bottom: 2px solid transparent; }
.tab.selected { color: #0f6fff; border-color: #0f6fff; }
.panel-body { flex: 1; margin: 16px 16px 0; display: flex; justify-content: space-between; }
.settings { width: 440px; }
.fields { display: grid; grid-template-columns: 121px 160px; row-gap: 10px; align-items: center; }
.fields input { width: 100%; height: 32px; padding: 0 11px; border: 1px solid var(--line); border-radius: 4px; background: #fff; outline: 0; }
.fields .tall { height: 42px; padding: 0 7px 0 12px; border-color: #585d76; }
.fields .tall:disabled { color: var(--faint); background: #f5f5f5; border-color: var(--line); }
.switch-row { display: flex; align-items: center; height: 22px; margin-top: 15px; }
.fields + .switch-row { margin-top: 11px; }
.switch-row svg { margin-left: 4px; }
.switch {
  appearance: none;
  width: 28px;
  height: 16px;
  padding: 2px;
  margin: 4px 0 0 7px;
  border-radius: 8px;
  background: #747474;
}
.switch::before { content: ""; display: block; width: 12px; height: 12px; border-radius: 6px; background: #fff; }
.emails { margin-top: 15px; }
.picker-emails select { color: var(--faint); }
.auto-run { margin-top: 41px; }
.schedule { display: flex; align-items: center; margin-top: 10px; gap: 5px; }
.auto-run + .schedule { margin-top: 15px; }
.picker-day { width: 65px; }
.picker-hour { width: 111px; }
.picker-minute { width: 126px; }
.clear { width: 62px; height: 32px; margin-left: 9px; border: 1px solid var(--line); border-radius: 4px; background: #f3f3f3; color: #b4b4b4; font-size: 12px; }
.scroll-track { width: 9px; border-radius: 5px; background: #f3f3f3; }
.scroll-thumb { height: 88%; border-radius: 5px; background: #b1b1b1; }
.panel-foot { display: flex; justify-content: flex-end; padding: 16px 36px 18px; }
.save { width: 104px; height: 30px; border-radius: 4px; background: var(--navy); color: #fff; font-size: 12px; }
```
